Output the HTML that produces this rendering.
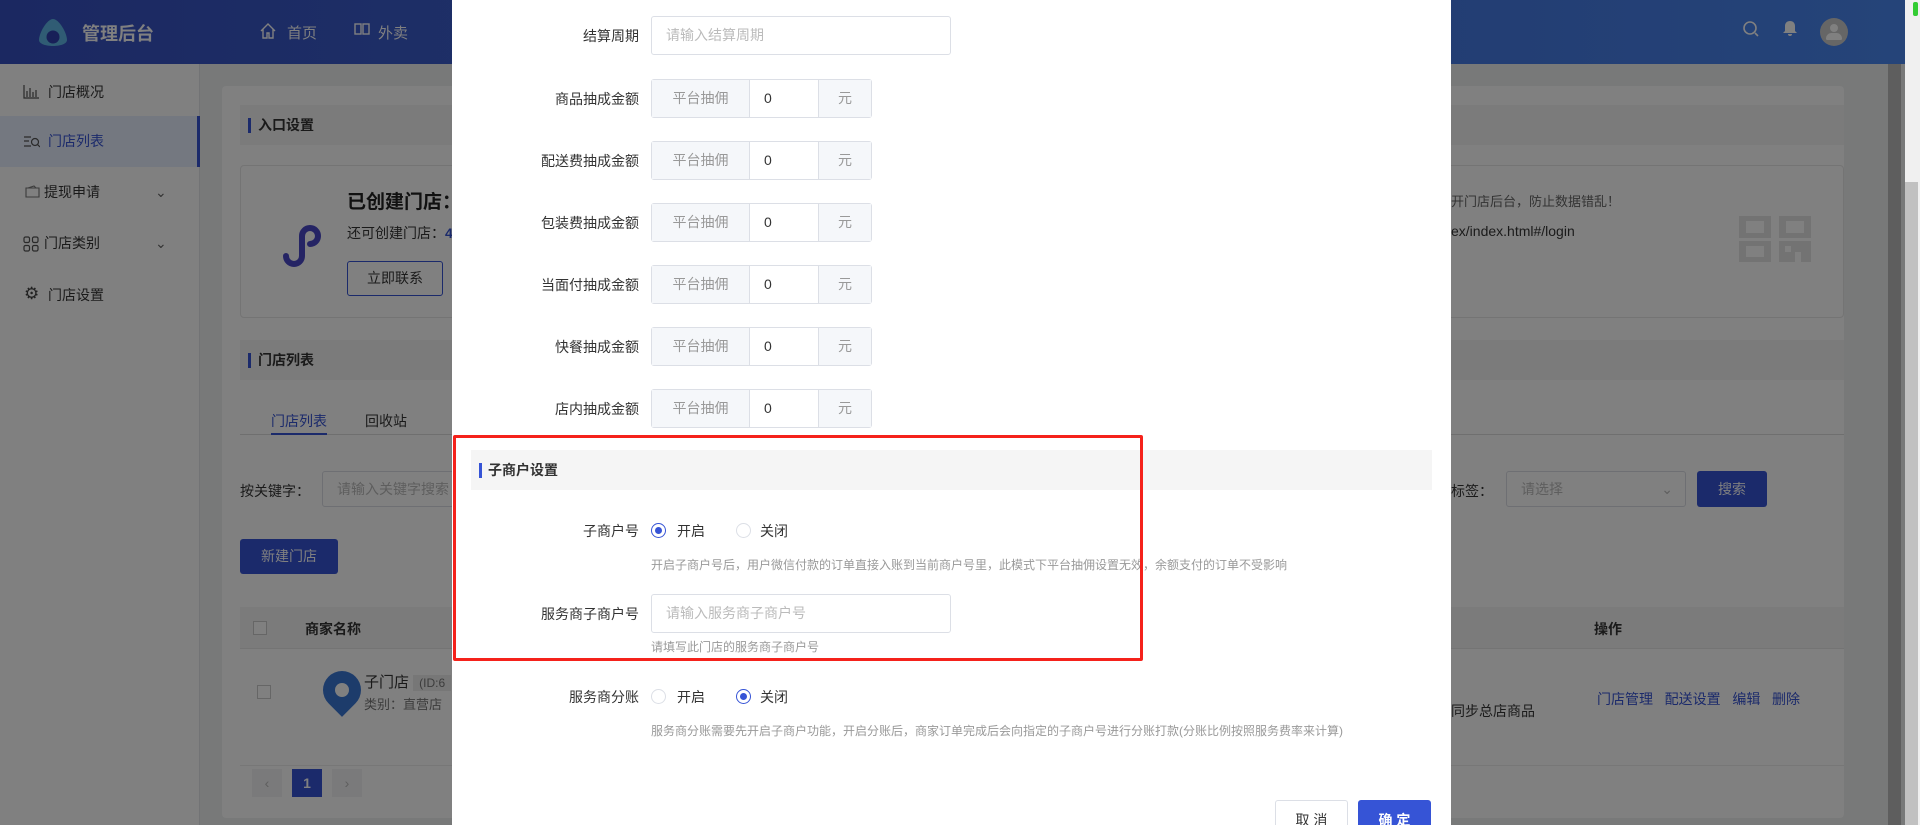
<!DOCTYPE html>
<html style="width:1920px;height:825px;overflow:hidden"><head><meta charset="utf-8"><style>
*{box-sizing:border-box;margin:0;padding:0}
body{width:1920px;height:825px;overflow:hidden;position:relative;font-family:"Liberation Sans","Noto Sans CJK SC",sans-serif;font-size:14px;color:#1a1a1a;background:#787979}
.abs{position:absolute}
.hdr{left:0;top:0;width:1905px;height:64px;background:linear-gradient(90deg,#1b2861,#254479)}
.hdr .t{color:#808080}
.side{left:0;top:64px;width:200px;height:761px;background:#808080;border-right:1px solid #727375}
.si{position:absolute;left:0;width:200px;height:51px;line-height:51px;padding-left:48px;font-size:14px;color:#1a1a1a}
.card{left:222px;top:86px;width:1622px;height:732px;background:#808080;border-radius:4px}
.bar{background:#7b7b7b;height:40px;line-height:40px;padding-left:18px;font-size:14px;font-weight:bold;position:absolute}
.bar:before{content:"";position:absolute;left:8px;top:13px;width:3px;height:15px;background:#1b2a6b}
.mbar{background:#f5f5f5}
.mbar:before{background:#3654d6}
.modal{left:452px;top:0;width:999px;height:825px;background:#fff;z-index:10;overflow:hidden;color:#333}
.lbl{position:absolute;right:812px;font-size:14px;color:#333;text-align:right;white-space:nowrap}
.inp{position:absolute;border:1px solid #dcdfe6;border-radius:3px;background:#fff;color:#bbb;font-size:14px;padding-left:14px}
.dinp{position:absolute;border:1px solid #6e6f73;border-radius:3px;background:#808080;color:#5e5e5e;font-size:14px;padding-left:14px}
.grp{position:absolute;left:199px;width:221px;height:39px;border:1px solid #dcdfe6;border-radius:3px;display:flex;font-size:14px}
.grp .a{width:98px;background:#f5f7fa;color:#999;text-align:center;line-height:37px;border-right:1px solid #dcdfe6}
.grp .b{width:68px;line-height:37px;padding-left:14px;color:#333}
.grp .c{flex:1;background:#f5f7fa;color:#999;text-align:center;line-height:37px;border-left:1px solid #dcdfe6}
.help{position:absolute;left:199px;font-size:12px;color:#999;white-space:nowrap}
.rad{position:absolute;width:15px;height:15px;border:1px solid #dcdfe6;border-radius:50%;background:#fff}
.rad.on{border-color:#3654d6}
.rad.on:after{content:"";position:absolute;left:3px;top:3px;width:7px;height:7px;border-radius:50%;background:#3654d6}
.rt{position:absolute;font-size:14px;color:#333}
</style></head><body>
<div class="abs hdr">
 <svg class="abs" style="left:37px;top:18px" width="32" height="30" viewBox="0 0 32 30"><path d="M16 1C10 1 2 15 2 22c0 8 28 8 28 0C30 15 22 1 16 1z" fill="#305c74"/><circle cx="16" cy="19" r="6.5" fill="#182058"/></svg>
 <div class="abs t" style="left:82px;top:20px;font-size:18px;font-weight:bold">管理后台</div>
 <svg class="abs" style="left:259px;top:22px" width="18" height="18" viewBox="0 0 18 18" fill="none" stroke="#808080" stroke-width="1.4"><path d="M2 9L9 2l7 7M4 7v9h4v-5h2v5h4V7"/></svg>
 <div class="abs t" style="left:287px;top:22px;font-size:15px">首页</div>
 <svg class="abs" style="left:354px;top:22px" width="16" height="16" viewBox="0 0 16 16" fill="none" stroke="#808080" stroke-width="1.4"><rect x="1" y="2" width="6" height="10"/><rect x="9" y="2" width="6" height="10"/></svg>
 <div class="abs t" style="left:378px;top:22px;font-size:15px">外卖</div>
 <svg class="abs" style="left:1742px;top:20px" width="18" height="18" viewBox="0 0 18 18" fill="none" stroke="#808080" stroke-width="1.6"><circle cx="8" cy="8" r="6"/><path d="M13 13l3 3"/></svg>
 <svg class="abs" style="left:1782px;top:20px" width="16" height="17" viewBox="0 0 16 17" fill="#808080"><path d="M8 1c-3 0-5 2-5 5v5l-2 2h14l-2-2V6c0-3-2-5-5-5zM6 14h4a2 2 0 0 1-4 0z"/></svg>
 <div class="abs" style="left:1820px;top:18px;width:28px;height:28px;border-radius:50%;background:#666"><div class="abs" style="left:10px;top:6px;width:8px;height:8px;border-radius:50%;background:#808080"></div><div class="abs" style="left:6px;top:15px;width:16px;height:7px;border-radius:8px 8px 2px 2px;background:#808080"></div></div>
</div>
<div class="abs side">
 <div class="si" style="top:3px;">门店概况</div>
 <div class="si" style="top:52px;background:#747880;color:#1b2a6b;border-right:3px solid #1b2a6b">门店列表</div>
 <div class="si" style="top:103px;padding-left:44px">提现申请<span style="position:absolute;left:155px;color:#333">⌄</span></div>
 <div class="si" style="top:154px;padding-left:44px">门店类别<span style="position:absolute;left:155px;color:#333">⌄</span></div>
 <div class="si" style="top:206px">门店设置</div>
 <svg class="abs" style="left:23px;top:21px" width="16" height="14" viewBox="0 0 16 14" fill="none" stroke="#2a2a2a" stroke-width="1.2"><path d="M1 0v13h15M4 12V6M7 12V3M10 12V7M13 12V5"/></svg>
 <svg class="abs" style="left:24px;top:72px" width="16" height="12" viewBox="0 0 16 12" fill="none" stroke="#2a2a2a" stroke-width="1.2"><path d="M0 1h7M0 5h5M0 10h7"/><circle cx="11" cy="6" r="3.5"/><path d="M13.5 8.5L16 11"/></svg>
 <svg class="abs" style="left:25px;top:121px" width="15" height="13" viewBox="0 0 15 13" fill="none" stroke="#3c3c3c" stroke-width="1.1"><path d="M1 3h13v9H1zM3 3l6-2 2 2"/></svg>
 <svg class="abs" style="left:23px;top:172px" width="16" height="16" viewBox="0 0 16 16" fill="none" stroke="#2a2a2a" stroke-width="1.2"><rect x="1" y="1" width="5.5" height="5.5" rx="1.5"/><rect x="9.5" y="1" width="5.5" height="5.5" rx="1.5"/><rect x="1" y="9.5" width="5.5" height="5.5" rx="1.5"/><rect x="9.5" y="9.5" width="5.5" height="5.5" rx="1.5"/></svg>
 <div class="abs" style="left:24px;top:220px;font-size:17px;color:#222">⚙</div>
</div>
<div class="abs card">
 <div class="bar" style="left:18px;top:19px;width:1604px">入口设置</div>
 <div class="abs" style="left:18px;top:79px;width:1604px;height:153px;border:1px solid #747474;border-radius:4px"></div>
 <svg class="abs" style="left:58px;top:136px" width="46" height="46" viewBox="0 0 46 46" fill="none" stroke="#252464" stroke-width="6" stroke-linecap="round"><path d="M6 34a8 8 0 1 0 16 0V14a8 8 0 1 1 16 0a8 8 0 0 1-8 8"/></svg>
 <div class="abs" style="left:125px;top:101px;font-size:19px;font-weight:bold;color:#111">已创建门店：</div>
 <div class="abs" style="left:125px;top:137px;font-size:14px">还可创建门店：<b style="color:#1b2a6b">4</b></div>
 <div class="abs" style="left:125px;top:175px;width:96px;height:35px;border:1px solid #1b2a6b;border-radius:3px;text-align:center;line-height:33px">立即联系</div>
 <div class="abs" style="left:1229px;top:105px;font-size:13px;color:#333">开门店后台，防止数据错乱！</div>
 <div class="abs" style="left:1229px;top:137px;font-size:14px;color:#1a1a1a">ex/index.html#/login</div>
 <svg class="abs" style="left:1517px;top:130px" width="72" height="46" viewBox="0 0 72 46" fill="#737373"><path d="M0 0h32v22H0zM7 5v12h18V5zM40 0h32v22H40zM47 5v12h18V5zM0 25h32v21H0zM7 30v11h18V30zM40 25h32v21H40z"/><path d="M46 30h6v6h-6zM56 36h6v10h-6z" fill="#808080"/></svg>
 <div class="bar" style="left:18px;top:254px;width:1604px">门店列表</div>
 <div class="abs" style="left:18px;top:348px;width:1604px;height:1px;background:#6f6f6f"></div>
 <div class="abs" style="left:49px;top:325px;color:#1b2a6b">门店列表</div>
 <div class="abs" style="left:49px;top:347px;width:56px;height:2px;background:#1b2a6b"></div>
 <div class="abs" style="left:143px;top:325px">回收站</div>
 <div class="abs" style="left:18px;top:395px">按关键字：</div>
 <div class="dinp" style="left:100px;top:385px;width:200px;height:36px;line-height:34px">请输入关键字搜索</div>
 <div class="abs" style="left:1229px;top:395px">标签：</div>
 <div class="dinp" style="left:1284px;top:385px;width:180px;height:36px;line-height:34px">请选择<span style="position:absolute;right:12px;color:#5e5e5e">⌄</span></div>
 <div class="abs" style="left:1475px;top:385px;width:70px;height:36px;background:#1b2a6b;color:#808080;border-radius:3px;text-align:center;line-height:36px">搜索</div>
 <div class="abs" style="left:18px;top:453px;width:98px;height:35px;background:#1b2a6b;color:#808080;border-radius:3px;text-align:center;line-height:35px">新建门店</div>
 <div class="abs" style="left:18px;top:521px;width:1604px;height:42px;background:#7b7b7b;border-bottom:1px solid #747474"></div>
 <div class="abs" style="left:31px;top:535px;width:14px;height:14px;border:1px solid #666;background:#808080"></div>
 <div class="abs" style="left:83px;top:533px;font-weight:bold">商家名称</div>
 <div class="abs" style="left:1372px;top:533px;font-weight:bold">操作</div>
 <div class="abs" style="left:35px;top:599px;width:14px;height:14px;border:1px solid #666;background:#808080"></div>
 <div class="abs" style="left:101px;top:585px;width:38px;height:38px;border-radius:50% 50% 50% 0;transform:rotate(-45deg);background:#1d3c6b"></div>
 <div class="abs" style="left:113px;top:597px;width:14px;height:14px;border-radius:50%;background:#808080"></div>
 <div class="abs" style="left:142px;top:585px;font-size:15px">子门店 <span style="background:#777;color:#3c3c3c;font-size:12px;padding:1px 6px">(ID:6</span></div>
 <div class="abs" style="left:142px;top:608px;font-size:13px;color:#3c3c3c">类别：直营店</div>
 <div class="abs" style="left:1229px;top:615px;">同步总店商品</div>
 <div class="abs" style="left:1375px;top:603px;color:#1b2a6b">门店管理&nbsp;&nbsp;&nbsp;配送设置&nbsp;&nbsp;&nbsp;编辑&nbsp;&nbsp;&nbsp;删除</div>
 <div class="abs" style="left:18px;top:679px;width:1604px;height:1px;background:#777"></div>
 <div class="abs" style="left:30px;top:683px;width:30px;height:28px;background:#7a7a7b;text-align:center;line-height:28px;color:#5e5e5e">‹</div>
 <div class="abs" style="left:70px;top:683px;width:30px;height:28px;background:#1b2a6b;color:#808080;text-align:center;line-height:28px;font-weight:bold">1</div>
 <div class="abs" style="left:110px;top:683px;width:30px;height:28px;background:#7a7a7b;text-align:center;line-height:28px;color:#5e5e5e">›</div>
</div>
<div class="abs" style="left:1888px;top:64px;width:13px;height:761px;background:#5e5e5e"></div>
<div class="abs" style="left:1905px;top:0;width:15px;height:825px;background:#f0f0f0;z-index:6"></div>
<div class="abs" style="left:1905px;top:182px;width:13px;height:643px;background:#c1c1c1;z-index:7"></div>
<div class="abs" style="left:1913px;top:2px;width:5px;height:14px;background:#3c3;border-radius:2px;z-index:7"></div>
<div class="abs modal">
 <div class="lbl" style="top:26px">结算周期</div>
 <div class="inp" style="left:199px;top:16px;width:300px;height:39px;line-height:37px">请输入结算周期</div>
 <div class="lbl" style="top:89px">商品抽成金额</div>
 <div class="grp" style="top:79px"><div class="a">平台抽佣</div><div class="b">0</div><div class="c">元</div></div>
 <div class="lbl" style="top:151px">配送费抽成金额</div>
 <div class="grp" style="top:141px"><div class="a">平台抽佣</div><div class="b">0</div><div class="c">元</div></div>
 <div class="lbl" style="top:213px">包装费抽成金额</div>
 <div class="grp" style="top:203px"><div class="a">平台抽佣</div><div class="b">0</div><div class="c">元</div></div>
 <div class="lbl" style="top:275px">当面付抽成金额</div>
 <div class="grp" style="top:265px"><div class="a">平台抽佣</div><div class="b">0</div><div class="c">元</div></div>
 <div class="lbl" style="top:337px">快餐抽成金额</div>
 <div class="grp" style="top:327px"><div class="a">平台抽佣</div><div class="b">0</div><div class="c">元</div></div>
 <div class="lbl" style="top:399px">店内抽成金额</div>
 <div class="grp" style="top:389px"><div class="a">平台抽佣</div><div class="b">0</div><div class="c">元</div></div>
 <div class="bar mbar" style="left:19px;top:450px;width:961px;font-weight:bold;padding-left:17px">子商户设置</div>
 <div class="lbl" style="top:521px">子商户号</div>
 <div class="rad on" style="left:199px;top:523px"></div><div class="rt" style="left:225px;top:521px">开启</div>
 <div class="rad" style="left:284px;top:523px"></div><div class="rt" style="left:308px;top:521px">关闭</div>
 <div class="help" style="top:556px">开启子商户号后，用户微信付款的订单直接入账到当前商户号里，此模式下平台抽佣设置无效，余额支付的订单不受影响</div>
 <div class="lbl" style="top:604px">服务商子商户号</div>
 <div class="inp" style="left:199px;top:594px;width:300px;height:39px;line-height:37px">请输入服务商子商户号</div>
 <div class="help" style="top:638px">请填写此门店的服务商子商户号</div>
 <div class="lbl" style="top:687px">服务商分账</div>
 <div class="rad" style="left:199px;top:689px"></div><div class="rt" style="left:225px;top:687px">开启</div>
 <div class="rad on" style="left:284px;top:689px"></div><div class="rt" style="left:308px;top:687px">关闭</div>
 <div class="help" style="top:722px">服务商分账需要先开启子商户功能，开启分账后，商家订单完成后会向指定的子商户号进行分账打款(分账比例按照服务费率来计算)</div>
 <div class="abs" style="left:823px;top:800px;width:73px;height:40px;border:1px solid #dcdfe6;border-radius:3px;text-align:center;line-height:38px">取 消</div>
 <div class="abs" style="left:906px;top:800px;width:73px;height:40px;background:#3654d6;color:#fff;border-radius:3px;text-align:center;line-height:40px;font-weight:bold">确 定</div>
 <div class="abs" style="left:1px;top:435px;width:690px;height:226px;border:3px solid #f5221b;border-radius:2px"></div>
</div>
</body></html>
